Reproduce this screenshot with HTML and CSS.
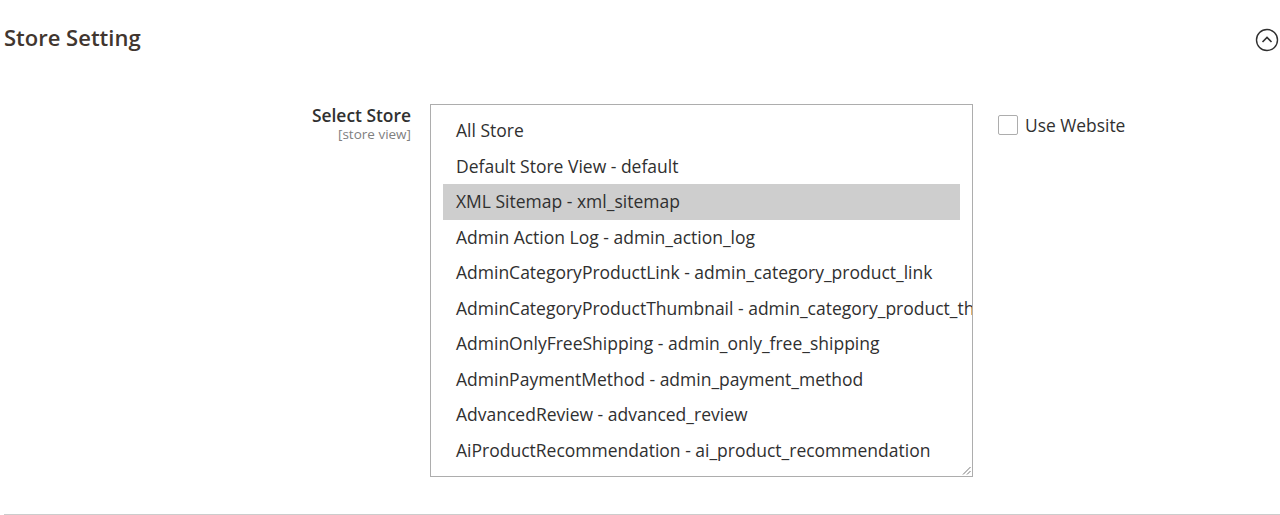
FILE: index.html
```html
<!DOCTYPE html>
<html lang="en">
<head>
    <meta charset="UTF-8">
    <title>Store Setting</title>
    <link rel="stylesheet" href="styles.css">
</head>
<body>
    <div class="section">
        <div class="section-head">
            <h2>Store Setting</h2>
            <span class="toggle">
                <svg width="24" height="24" viewBox="0 0 24 24">
                    <circle cx="12" cy="12" r="10.5" fill="none" stroke="#303030" stroke-width="1.4"/>
                    <path d="M7.5 14 L12 9.5 L16.5 14" fill="none" stroke="#303030" stroke-width="1.6"/>
                </svg>
            </span>
        </div>

        <div class="field">
            <div class="field-label">
                <span class="label-main">Select Store</span>
                <span class="label-scope">[store view]</span>
            </div>
            <div class="store-list">
                <div class="option">All Store</div>
                <div class="option">Default Store View - default</div>
                <div class="option selected">XML Sitemap - xml_sitemap</div>
                <div class="option">Admin Action Log - admin_action_log</div>
                <div class="option">AdminCategoryProductLink - admin_category_product_link</div>
                <div class="option">AdminCategoryProductThumbnail - admin_category_product_thumbnail</div>
                <div class="option">AdminOnlyFreeShipping - admin_only_free_shipping</div>
                <div class="option">AdminPaymentMethod - admin_payment_method</div>
                <div class="option">AdvancedReview - advanced_review</div>
                <div class="option">AiProductRecommendation - ai_product_recommendation</div>
                <svg class="grip" width="9" height="9" viewBox="0 0 9 9">
                    <path d="M8.5 1 L1 8.5 M8.5 5 L5 8.5" stroke="#777" stroke-width="1"/>
                </svg>
            </div>
            <label class="use-website">
                <span class="checkbox"></span>
                Use Website
            </label>
        </div>
    </div>
</body>
</html>
```

FILE: styles.css
```css
body {
    margin: 0;
    font-family: "Open Sans", sans-serif;
    color: #303030;
    background: #fff;
}
.section {
    height: 514px;
    margin-left: 4px;
    border-bottom: 1px solid #cccccc;
}
.section-head {
    display: flex;
    justify-content: space-between;
    align-items: center;
    height: 78px;
}
.section-head h2 {
    margin: 0 0 4px;
    font-size: 22px;
    font-weight: 600;
    color: #41362f;
}
.toggle {
    display: flex;
    margin-right: 1px;
    margin-top: 2px;
}
.field {
    display: flex;
    align-items: flex-start;
    margin-top: 26px;
}
.field-label {
    width: 407px;
    display: flex;
    flex-direction: column;
    align-items: flex-end;
}
.label-main {
    font-size: 17.4px;
    font-weight: 600;
    line-height: 22px;
}
.label-scope {
    font-size: 13.5px;
    color: #808080;
    line-height: 17px;
}
.store-list {
    position: relative;
    margin-left: 19px;
    width: 517px;
    height: 355px;
    padding: 8px 12px;
    border: 1px solid #adadad;
    overflow: hidden;
    font-size: 17.5px;
}
.option {
    height: 35.5px;
    line-height: 35.5px;
    padding-left: 13px;
    white-space: nowrap;
}
.option.selected {
    background: #cecece;
}
.grip {
    position: absolute;
    right: 1px;
    bottom: 1px;
}
.use-website {
    display: flex;
    align-items: center;
    gap: 7px;
    margin-left: 25px;
    margin-top: 9px;
    font-size: 17.4px;
}
.checkbox {
    width: 18px;
    height: 18px;
    border: 1px solid #adadad;
    border-radius: 2px;
    background: #fff;
}
```
